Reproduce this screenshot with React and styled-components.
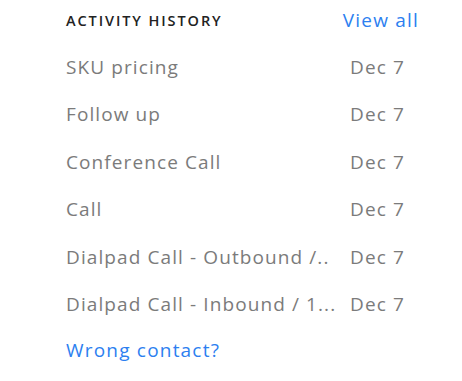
import React from 'react'
import styled, { createGlobalStyle } from 'styled-components'

const GlobalStyle = createGlobalStyle`
body {
  margin:0;
  background:#ffffff;
  font-family:"Open Sans", "Liberation Sans", sans-serif;
}
`

const Panel = styled.div`
width:462px;
height:381px;
box-sizing:border-box;
padding:6px 43px 0 66px;
`

const Header = styled.div`
display:flex;
align-items:center;
justify-content:space-between;
height:28px;
`

const Title = styled.h3`
margin:0;
font-size:14.5px;
font-weight:600;
letter-spacing:1.9px;
color:#222222;
`

const Link = styled.a`
font-size:19px;
letter-spacing:1.2px;
color:#2d7ff0;
text-decoration:none;
cursor:pointer;
`

const List = styled.ul`
list-style:none;
margin:9px 0 0;
padding:0;
`

const Row = styled.li`
display:grid;
grid-template-columns:1fr 69px;
column-gap:8px;
align-items:center;
height:47.5px;
font-size:19px;
letter-spacing:1.1px;
color:#7b7b7b;
`

const Name = styled.span`
white-space:nowrap;
`

const Footer = styled.div`
height:44px;
display:flex;
align-items:center;
`

const items = [
  'SKU pricing',
  'Follow up',
  'Conference Call',
  'Call',
  'Dialpad Call - Outbound /..',
  'Dialpad Call - Inbound / 1...',
]

export default function App() {
  return (
    <>
      <GlobalStyle />
      <Panel>
        <Header>
          <Title>ACTIVITY HISTORY</Title>
          <Link>View all</Link>
        </Header>
        <List>
          {items.map((name, i) => (
            <Row key={i}>
              <Name>{name}</Name>
              <span>Dec 7</span>
            </Row>
          ))}
        </List>
        <Footer>
          <Link>Wrong contact?</Link>
        </Footer>
      </Panel>
    </>
  )
}
